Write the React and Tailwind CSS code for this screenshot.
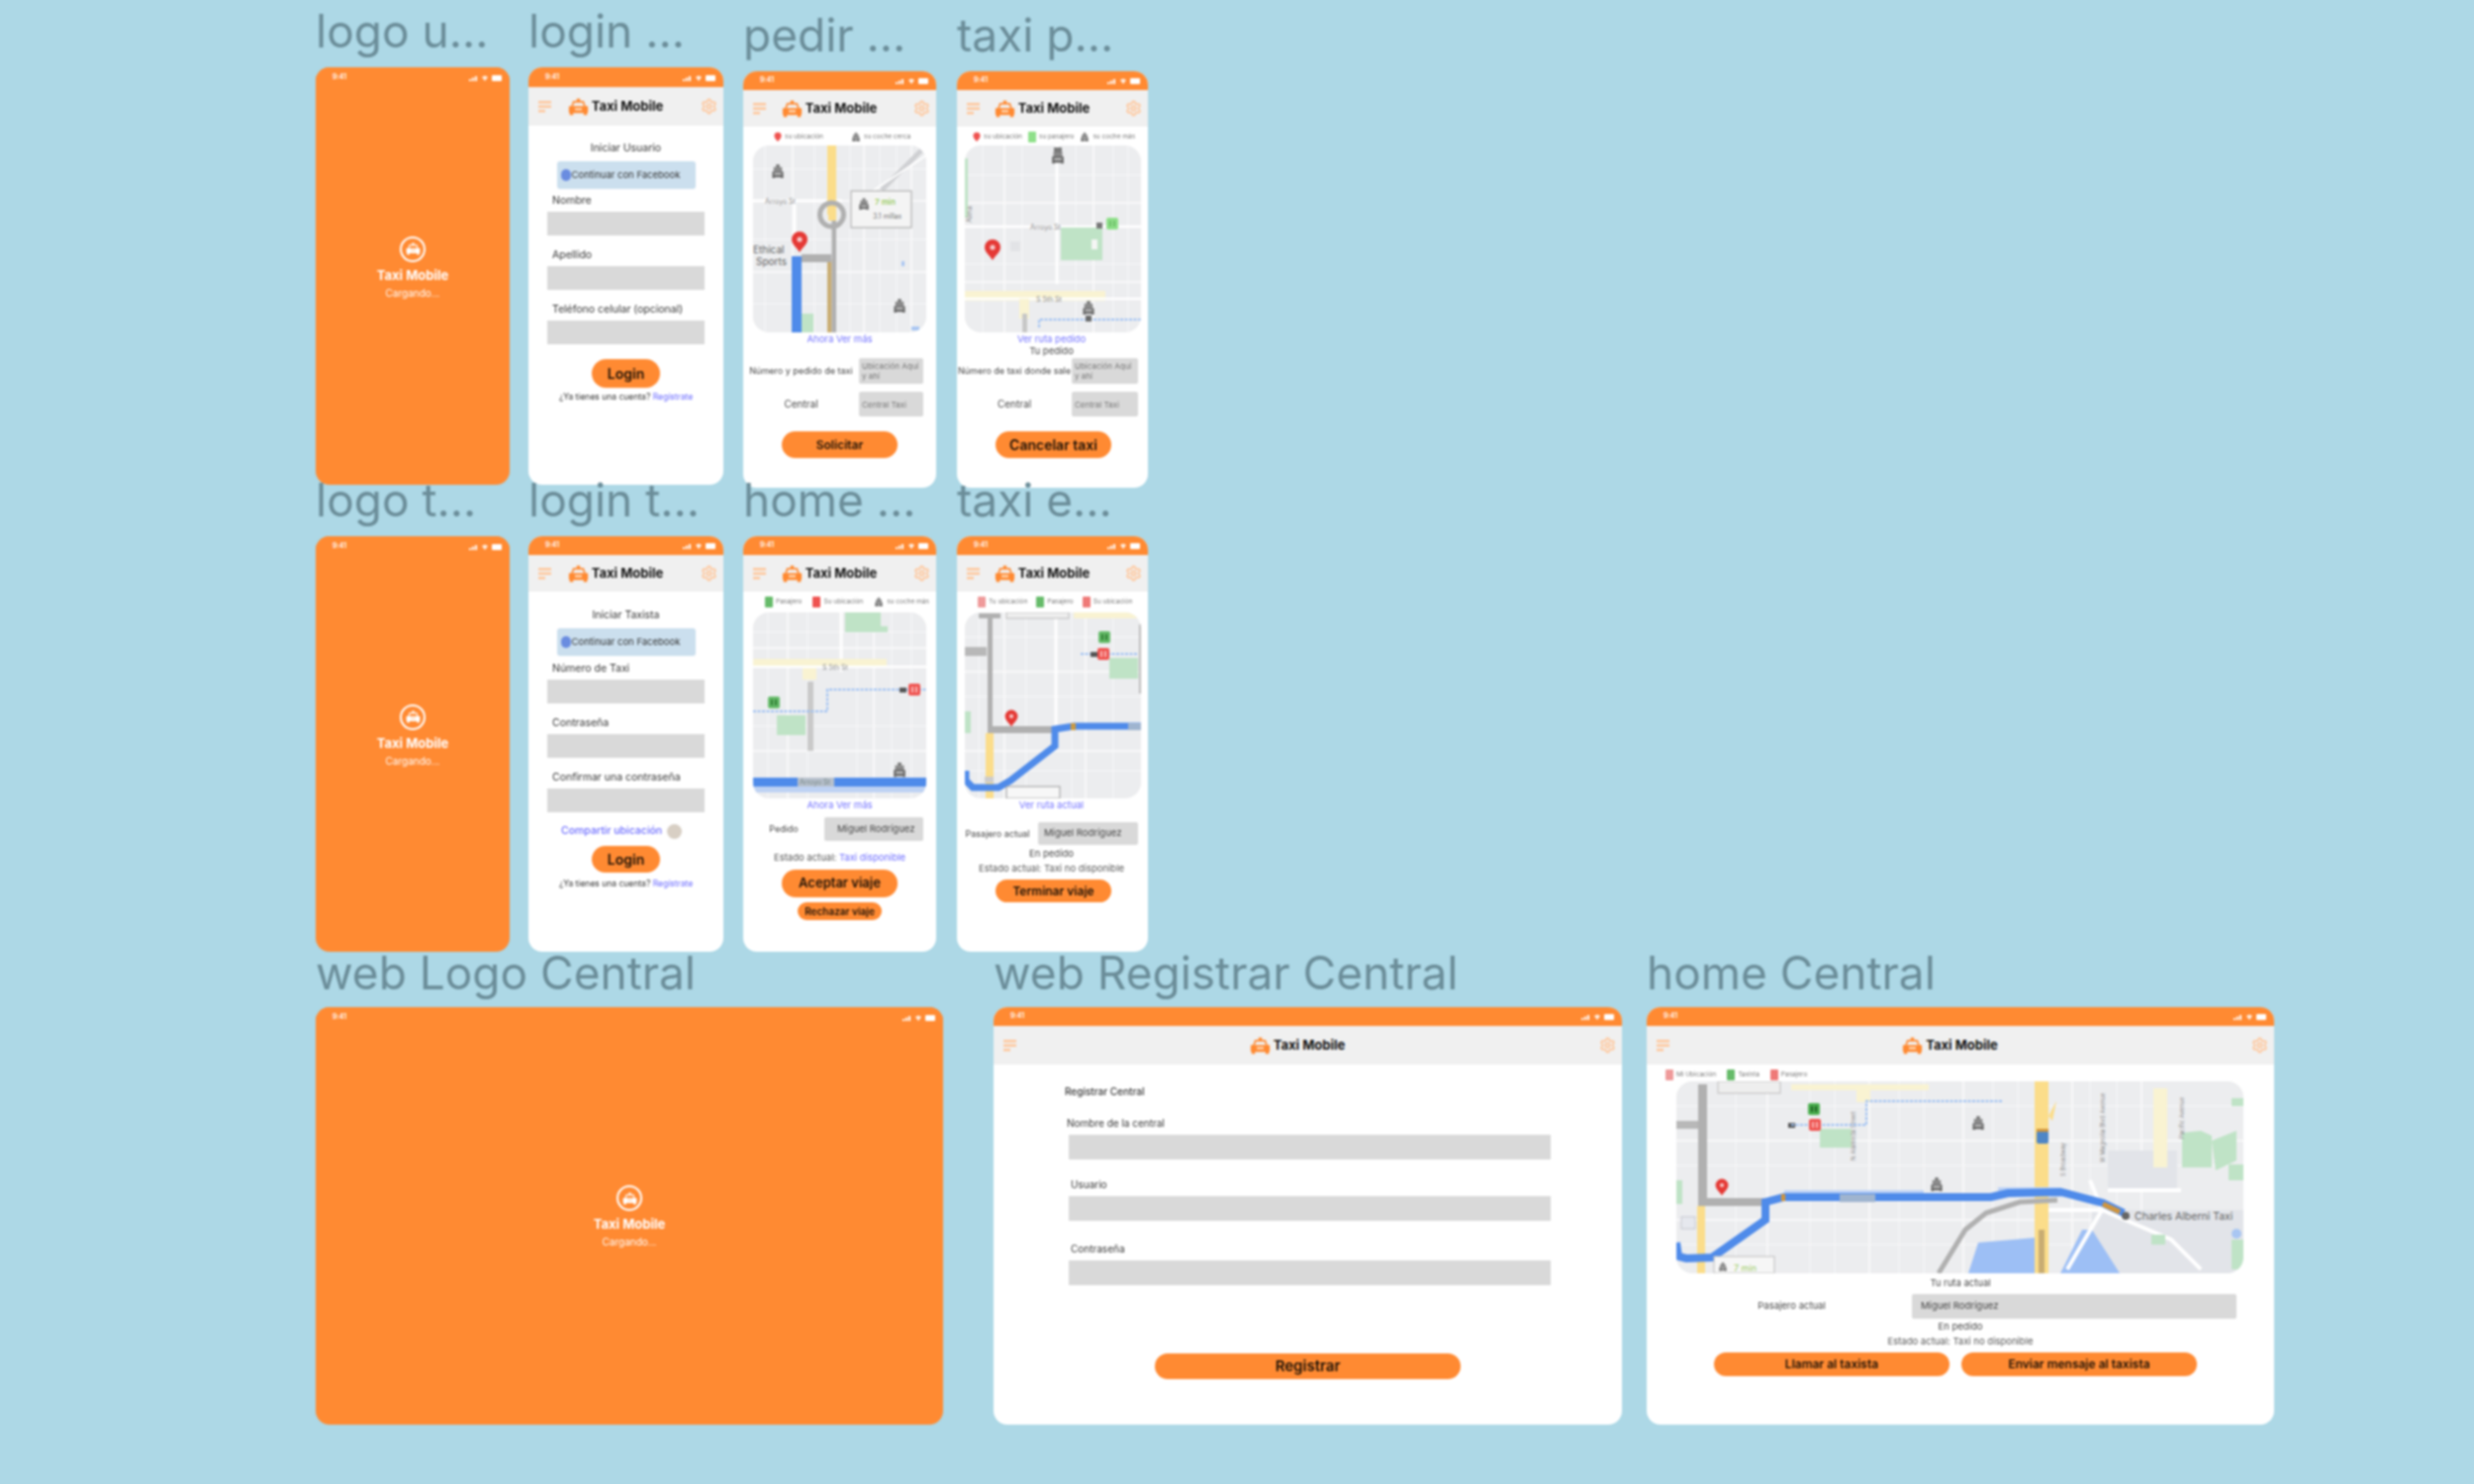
import React from "react";
import { Settings } from "lucide-react";

const ORANGE = "#ff8a32";

function TaxiIcon({ className, color = ORANGE }) {
  return (
    <svg viewBox="0 0 24 20" className={className}>
      <rect x="10" y="0.5" width="4" height="3" fill={color} />
      <path d="M4.5 10 L6.5 4 H17.5 L19.5 10" fill="none" stroke={color} strokeWidth="2" />
      <rect x="1" y="9" width="22" height="8" rx="1" fill={color} />
      <rect x="2" y="16.5" width="4" height="3" fill={color} />
      <rect x="18" y="16.5" width="4" height="3" fill={color} />
      <rect x="8" y="11.5" width="8" height="2.5" fill="#ffd9b8" />
    </svg>
  );
}

function Hamburger() {
  return (
    <svg viewBox="0 0 14 12" className="w-[14px] h-[12px]">
      <rect x="0" y="0" width="13" height="2.5" fill="#ffc79c" />
      <rect x="0" y="4.5" width="13" height="2.5" fill="#ffc79c" />
      <rect x="0" y="9" width="7" height="2.5" fill="#ffc79c" />
    </svg>
  );
}

function StatusIcons() {
  return (
    <svg viewBox="0 0 34 7" className="w-[34px] h-[7px]">
      <rect x="0" y="5" width="2" height="2" fill="#fff" />
      <rect x="3" y="3.5" width="2" height="3.5" fill="#fff" />
      <rect x="6" y="2" width="2" height="5" fill="#fff" />
      <path d="M13 3 Q16 0 19 3 L16 7 Z" fill="#fff" opacity="0.85" />
      <rect x="23" y="1" width="10" height="6" rx="1" fill="#fff" />
    </svg>
  );
}

function StatusBar({ h = "h-[19px]", pl = "pl-[17px]", pr = "pr-[7px]" }) {
  return (
    <div className={`flex items-center justify-between shrink-0 bg-[#ff8a32] text-white text-[7px] font-semibold ${h} ${pl} ${pr}`}>
      <span>9:41</span>
      <StatusIcons />
    </div>
  );
}

function Header({ h = "h-[39px]", pl = "pl-[10px]", pr = "pr-[6px]" }) {
  return (
    <div className={`flex items-center justify-between shrink-0 bg-[#f0f0f0] ${h} ${pl} ${pr}`}>
      <Hamburger />
      <div className="flex items-center gap-[3px] mr-[22px]">
        <TaxiIcon className="w-[21px] h-[18px]" />
        <span className="text-[13px] font-bold text-[#111] leading-none">Taxi Mobile</span>
      </div>
      <Settings className="w-[17px] h-[17px] text-[#ffc79c]" strokeWidth={2.5} />
    </div>
  );
}

function Frame({ pos, label, mb = "mb-[10px]", children }) {
  return (
    <div className={`absolute ${pos}`}>
      <div className={`h-[53px] leading-[53px] text-[46px] text-[#6b8d99] whitespace-nowrap ${mb}`}>{label}</div>
      {children}
    </div>
  );
}

function Splash({ size, pb = "pb-0" }) {
  return (
    <div className={`relative flex flex-col items-center justify-center rounded-[14px] overflow-hidden bg-[#ff8a32] text-white ${size} ${pb}`}>
      <div className="absolute top-0 left-0 right-0">
        <StatusBar h="h-[20px]" pl="pl-[17px]" pr="pr-[7px]" />
      </div>
      <div className="w-[26px] h-[26px] rounded-full border-[2.5px] border-white flex items-center justify-center">
        <TaxiIcon className="w-[15px] h-[13px]" color="#ffffff" />
      </div>
      <div className="text-[13px] font-bold leading-none mt-[7px]">Taxi Mobile</div>
      <div className="text-[10px] leading-none mt-[6px]">Cargando...</div>
    </div>
  );
}

function Btn({ className, text, children }) {
  return (
    <div className={`rounded-full bg-[#ff8a32] flex items-center justify-center font-semibold text-[#1a1006] ${className} ${text}`}>
      {children}
    </div>
  );
}

function Field({ label, labelPl = "pl-[5px]", className = "" }) {
  return (
    <div className={`mx-[19px] ${className}`}>
      <div className={`h-[12px] leading-[12px] text-[10.5px] text-[#333] whitespace-nowrap ${labelPl}`}>{label}</div>
      <div className="h-[24px] mt-[5px] bg-[#d9d9d9]" />
    </div>
  );
}

function FbButton({ className = "" }) {
  return (
    <div className={`w-[140px] h-[28px] mx-auto bg-[#cbdfee] rounded-[3px] flex items-center pl-[4px] gap-[1px] ${className}`}>
      <span className="w-[10px] h-[12px] rounded-full bg-[#6a8ce0] shrink-0" />
      <span className="text-[9.5px] text-[#333] whitespace-nowrap">Continuar con Facebook</span>
    </div>
  );
}

function Footer({ className = "" }) {
  return (
    <div className={`text-center text-[8.5px] leading-[12px] text-[#333] ${className}`}>
      ¿Ya tienes una cuenta? <span className="text-[#6a6aff]">Regístrate</span>
    </div>
  );
}

/* ---------- map pieces ---------- */
function Grid({ w, h, vs, hs }) {
  return (
    <g stroke="#f8f8f9" fill="none">
      {vs.map((x, i) => (
        <line key={"v" + i} x1={x} x2={x} y1="0" y2={h} strokeWidth={i % 3 === 1 ? 2 : 1} />
      ))}
      {hs.map((y, i) => (
        <line key={"h" + i} y1={y} y2={y} x1="0" x2={w} strokeWidth={i % 2 === 1 ? 2 : 1} />
      ))}
    </g>
  );
}

function Car({ x, y, s = 1 }) {
  return (
    <g transform={`translate(${x} ${y}) scale(${s * 0.9})`} fill="#6a6a6a">
      <rect x="-2" y="-9" width="4" height="3" />
      <rect x="-5" y="-6" width="10" height="5" fill="#8a8a8a" />
      <rect x="-6.5" y="-1" width="13" height="7" rx="1" />
      <rect x="-4" y="1" width="8" height="2" fill="#cfcfcf" />
      <rect x="-6.5" y="5" width="3" height="2" />
      <rect x="3.5" y="5" width="3" height="2" />
    </g>
  );
}

function Pin({ x, y, s = 1 }) {
  return (
    <g transform={`translate(${x} ${y}) scale(${s})`}>
      <path d="M0 13 C-3 8 -8 5 -8 0 A8 8 0 0 1 8 0 C8 5 3 8 0 13 Z" fill="#e53935" />
      <circle cx="0" cy="0" r="2.6" fill="#f7c9c9" />
    </g>
  );
}

function Marker({ x, y, color, inner = "#fff" }) {
  return (
    <g transform={`translate(${x} ${y})`}>
      <rect x="-6" y="-6" width="12" height="12" rx="2" fill={color} />
      <rect x="-3" y="-3" width="2" height="6" fill={inner} />
      <rect x="1" y="-3" width="2" height="6" fill={inner} />
    </g>
  );
}

function MapT({ x, y, children, size = 6, color = "#8c8c8c", rot, weight }) {
  return (
    <text
      x={x}
      y={y}
      fontSize={size}
      fill={color}
      fontWeight={weight}
      fontFamily="Inter, sans-serif"
      transform={rot ? `rotate(${rot} ${x} ${y})` : undefined}
    >
      {children}
    </text>
  );
}

function Tip({ x, y, w, h, big }) {
  return (
    <g>
      <rect x={x} y={y} width={w} height={h} fill="#f4f4f4" stroke="#bdbdbd" strokeWidth="1.5" />
      <Car x={x + 13} y={y + 14} s={0.8} />
      <MapT x={x + 24} y={y + 14} size={big ? 10 : 8} color="#9ccc65" weight="600">7 min</MapT>
      <MapT x={x + 22} y={y + 28} size={7} color="#777">3.1 millas</MapT>
    </g>
  );
}

const BLUE = "#4f8bea";
const PARK = "#bfe3c6";

function MapPedir() {
  return (
    <svg viewBox="0 0 175 189" className="block w-[175px] h-[189px]">
      <rect width="175" height="189" fill="#ecedef" />
      <Grid w={175} h={189} vs={[12, 40, 62, 98, 112, 128, 145, 160]} hs={[24, 56, 95, 128, 160]} />
      <path d="M130 45 L170 5" stroke="#cfd0d3" strokeWidth="5" />
      <path d="M100 60 L175 10" stroke="#fff" strokeWidth="2" />
      <line x1="0" x2="90" y1="56" y2="56" stroke="#fff" strokeWidth="3" />
      <line x1="42" x2="42" y1="56" y2="100" stroke="#fff" strokeWidth="3" />
      <rect x="75" y="0" width="9" height="70" fill="#fbdd8a" />
      <rect x="75" y="115" width="4.5" height="74" fill="#c9ad72" />
      <rect x="79.5" y="70" width="4.5" height="119" fill="#b0b0b0" />
      <rect x="49" y="110" width="30" height="8" fill="#b0b0b0" />
      <path d="M80 58 A11 11 0 1 1 79 82 A11 11 0 1 1 80 58 Z" fill="none" stroke="#b0b0b0" strokeWidth="5" />
      <rect x="76" y="62" width="8" height="14" fill="#fbdd8a" />
      <rect x="49" y="170" width="12" height="19" fill={PARK} />
      <rect x="39" y="112" width="10" height="77" fill={BLUE} />
      <rect x="150" y="117" width="3" height="5" fill="#a9c6f2" />
      <rect x="160" y="183" width="8" height="4" fill="#a9c6f2" />
      <MapT x={12} y={59} size={7}>Arroyo St</MapT>
      <MapT x={0} y={109} size={10} color="#5f5f5f">Ethical</MapT>
      <MapT x={3} y={121} size={10} color="#5f5f5f">Sports</MapT>
      <Pin x={47} y={95} />
      <Car x={25} y={27} s={0.95} />
      <Car x={148} y={163} s={0.95} />
      <Tip x={99} y={46} w={61} h={37} />
    </svg>
  );
}

function MapPedido() {
  return (
    <svg viewBox="0 0 178 189" className="block w-[178px] h-[189px]">
      <rect width="178" height="189" fill="#ecedef" />
      <Grid w={178} h={189} vs={[18, 40, 58, 112, 130, 150, 165]} hs={[30, 58, 120, 138]} />
      <rect x="0" y="13" width="3" height="60" fill={PARK} />
      <rect x="0" y="147" width="142" height="10" fill="#f9f3d2" />
      <line x1="93" x2="93" y1="0" y2="140" stroke="#fff" strokeWidth="3" />
      <line x1="0" x2="178" y1="82" y2="82" stroke="#fff" strokeWidth="2.5" />
      <line x1="0" x2="178" y1="155" y2="155" stroke="#fff" strokeWidth="2.5" />
      <rect x="97" y="83" width="42" height="33" fill={PARK} />
      <rect x="128" y="95" width="6" height="10" fill="#f4f6f4" />
      <rect x="46" y="97" width="10" height="10" fill="#e2e3e6" />
      <rect x="55" y="155" width="10" height="20" fill="#f9f3d2" />
      <rect x="58" y="170" width="5" height="19" fill="#c7c7c7" />
      <MapT x={66} y={85} size={7}>Arroyo St</MapT>
      <MapT x={72} y={158} size={7}>S 5th St</MapT>
      <MapT x={7} y={78} size={7} rot={-90}>Alma</MapT>
      <path d="M75 184 V176 H178" fill="none" stroke="#9cc0f4" strokeWidth="2" strokeDasharray="3 1.5" />
      <Car x={94} y={12} s={1} />
      <rect x="90" y="2" width="8" height="5" fill="#7a7a7a" />
      <Car x={125} y={165} s={0.95} />
      <rect x="122" y="172" width="6" height="6" fill="#6a6a6a" />
      <rect x="133" y="78" width="6" height="6" fill="#777" />
      <Marker x={149} y={79} color="#8fe08a" inner="#6fbf6a" />
      <Pin x={28} y={103} />
    </svg>
  );
}

function MapHome() {
  return (
    <svg viewBox="0 0 175 188" className="block w-[175px] h-[188px]">
      <rect width="175" height="188" fill="#ecedef" />
      <Grid w={175} h={188} vs={[15, 35, 55, 105, 122, 140, 160]} hs={[20, 36, 115, 140]} />
      <path d="M93 0 H129 V14 H136 V20 H93 Z" fill={PARK} />
      <line x1="89" x2="89" y1="0" y2="60" stroke="#fff" strokeWidth="3" />
      <rect x="0" y="47" width="135" height="9" fill="#f9f3d2" />
      <rect x="50" y="56" width="14" height="12" fill="#f9f3d2" />
      <line x1="0" x2="175" y1="55" y2="55" stroke="#fff" strokeWidth="2.5" />
      <rect x="55" y="70" width="6" height="70" fill="#c9c9c9" />
      <path d="M0 100 H75 V78 H175" fill="none" stroke="#9cc0f4" strokeWidth="2" strokeDasharray="3 1.5" />
      <rect x="24" y="104" width="29" height="20" fill={PARK} />
      <rect x="148" y="76" width="7" height="5" fill="#555" />
      <Marker x={163} y={78} color="#ef5350" inner="#f9b3b1" />
      <Marker x={21} y={91} color="#66bb6a" inner="#2e7d32" />
      <Car x={148} y={160} s={1} />
      <rect x="0" y="173" width="175" height="9" fill="#bed2f3" />
      <rect x="0" y="167" width="175" height="9" fill={BLUE} />
      <rect x="45" y="167" width="37" height="9" fill="#b7c0cc" />
      <MapT x={47} y={174} size={7} color="#788">Arroyo St</MapT>
      <MapT x={70} y={58} size={7}>S 5th St</MapT>
    </svg>
  );
}

function MapEn() {
  return (
    <svg viewBox="0 0 178 188" className="block w-[178px] h-[188px]">
      <rect width="178" height="188" fill="#ecedef" />
      <Grid w={178} h={188} vs={[14, 40, 62, 108, 122, 150]} hs={[25, 60, 85, 140, 160]} />
      <rect x="0" y="100" width="6" height="22" fill={PARK} />
      <line x1="92" x2="92" y1="0" y2="116" stroke="#fff" strokeWidth="3" />
      <rect x="110" y="0" width="68" height="6" fill="#f9f3d2" />
      <rect x="146" y="46" width="29" height="21" fill={PARK} />
      <rect x="176" y="12" width="2" height="70" fill="#bbb" />
      <rect x="21" y="122" width="8" height="66" fill="#fbdd8a" />
      <rect x="14" y="1" width="22" height="5" fill="#b0b0b0" />
      <rect x="23" y="5" width="5" height="117" fill="#b0b0b0" />
      <rect x="0" y="35" width="22" height="9" fill="#b8b8b8" />
      <rect x="25" y="115" width="65" height="7" fill="#b0b0b0" />
      <rect x="42" y="0" width="63" height="6" fill="#eee" stroke="#bdbdbd" />
      <path
        d="M178 115 H110 L91 118 V135 L46 170 L34 177 H8 L1 170 V160"
        fill="none"
        stroke={BLUE}
        strokeWidth="7"
      />
      <rect x="107" y="112" width="5" height="7" fill="#c99a45" />
      <rect x="165" y="112" width="13" height="7" fill="#9fb4cf" />
      <rect x="20" y="166" width="9" height="6" fill="#ccc" />
      <rect x="42" y="176" width="54" height="12" fill="#f7f7f7" stroke="#999" />
      <path d="M117 42 H175" fill="none" stroke="#9cc0f4" strokeWidth="2" strokeDasharray="3 1.5" />
      <rect x="127" y="40" width="7" height="5" fill="#555" />
      <Marker x={140} y={42} color="#ef5350" inner="#f9b3b1" />
      <Marker x={141} y={25} color="#66bb6a" inner="#2e7d32" />
      <Pin x={47} y={105} s={0.8} />
    </svg>
  );
}

function MapCentral() {
  return (
    <svg viewBox="0 0 573 194" className="block w-[573px] h-[194px]">
      <rect width="573" height="194" fill="#ecedef" />
      <Grid
        w={573}
        h={194}
        vs={[60, 92, 135, 160, 195, 225, 250, 290, 320, 345, 400, 418, 445, 470]}
        hs={[25, 60, 85, 140, 165]}
      />
      <path d="M420 194 V130 L573 130 V194 Z" fill="#e2e4e9" />
      <rect x="436" y="70" width="70" height="40" fill="#e2e4e9" />
      <path d="M295 194 L305 163 L340 160 L362 158 V194 Z" fill="#9dbff5" />
      <path d="M388 194 L410 150 L420 150 L448 194 Z" fill="#9dbff5" />
      <path d="M375 130 L430 130 M418 100 L430 130 L395 190 M430 130 L500 160 L530 190 M436 110 H510" stroke="#fff" strokeWidth="4" fill="none" />
      <path d="M511 87 V52 L530 50 L541 55 V87 Z" fill={PARK} />
      <path d="M541 60 L566 50 V80 L545 90 Z" fill={PARK} />
      <rect x="558" y="84" width="15" height="16" fill={PARK} />
      <rect x="561" y="17" width="12" height="8" fill={PARK} />
      <rect x="480" y="155" width="14" height="10" fill={PARK} />
      <rect x="561" y="160" width="12" height="30" fill={PARK} />
      <rect x="0" y="100" width="6" height="24" fill={PARK} />
      <rect x="482" y="7" width="14" height="80" fill="#f9f3d2" />
      <rect x="116" y="3" width="139" height="6" fill="#f9f3d2" />
      <rect x="182" y="5" width="14" height="16" fill="#f9f3d2" />
      <rect x="145" y="48" width="32" height="19" fill={PARK} />
      <rect x="362" y="0" width="14" height="194" fill="#fbdd8a" />
      <path d="M376 35 L384 20 L380 40 Z" fill="#fbdd8a" />
      <rect x="21" y="126" width="8" height="68" fill="#fbdd8a" />
      <rect x="366" y="150" width="6" height="44" fill="#c9ad72" />
      <path d="M265 194 L292 150 L313 133 L347 122 L385 120" fill="none" stroke="#b0b0b0" strokeWidth="5" />
      <rect x="22" y="3" width="9" height="118" fill="#b0b0b0" />
      <rect x="0" y="40" width="22" height="8" fill="#b8b8b8" />
      <rect x="22" y="118" width="70" height="8" fill="#b0b0b0" />
      <rect x="42" y="0" width="63" height="12" fill="#eee" stroke="#bdbdbd" />
      <path d="M109 114 H250 M325 111 H389" stroke="#bdd2f5" strokeWidth="8" fill="none" />
      <path
        d="M0 163 L2 177 L10 179 L36 178 L90 140 V122 L109 117 H318 L335 113 L389 112 L431 123 L452 133"
        fill="none"
        stroke={BLUE}
        strokeWidth="8"
      />
      <path d="M431 124 L448 132" stroke="#d1953c" strokeWidth="5" />
      <rect x="106" y="114" width="4" height="7" fill="#d1953c" />
      <rect x="165" y="114" width="36" height="8" fill="#9fb4cf" />
      <circle cx="454" cy="136" r="4" fill="#666" />
      <MapT x={463} y={140} size={10.5} color="#5f5f5f">Charles Alberni Taxi</MapT>
      <MapT x={181} y={80} size={6} rot={-90}>N Alameda Street</MapT>
      <MapT x={393} y={96} size={6} rot={-90}>S Broadway</MapT>
      <MapT x={433} y={82} size={6} rot={-90}>W Magnolia Blvd Avenue</MapT>
      <MapT x={513} y={58} size={6} rot={-90}>Pacific Avenue</MapT>
      <rect x="113" y="42" width="7" height="5" fill="#555" />
      <path d="M116 44 H192 V20 H330" fill="none" stroke="#9cc0f4" strokeWidth="2" strokeDasharray="3 1.5" />
      <rect x="364" y="50" width="12" height="13" rx="2" fill="#4f86c6" />
      <rect x="364" y="48" width="12" height="3" fill="#d1953c" />
      <Marker x={140} y={44} color="#ef5350" inner="#f9b3b1" />
      <Marker x={139} y={28} color="#4caf50" inner="#1b5e20" />
      <Car x={305} y={43} s={0.95} />
      <Car x={263} y={105} s={0.95} />
      <Pin x={46} y={105} s={0.8} />
      <rect x="38" y="177" width="61" height="17" fill="#f6f6f6" stroke="#bdbdbd" />
      <Car x={47} y={188} s={0.6} />
      <MapT x={58} y={192} size={9} color="#9ccc65">7 min</MapT>
      <rect x="5" y="137" width="14" height="12" fill="#e6e8ee" stroke="#c6c8d0" />
      <circle cx="566" cy="154" r="5" fill="#a9c6f2" />
    </svg>
  );
}

/* ---------- legend ---------- */
function LegendPin() {
  return (
    <svg viewBox="-9 -9 18 23" className="w-[8px] h-[11px] shrink-0">
      <path d="M0 13 C-3 8 -8 5 -8 0 A8 8 0 0 1 8 0 C8 5 3 8 0 13 Z" fill="#ef5350" />
    </svg>
  );
}
function LegendCar() {
  return (
    <svg viewBox="-8 -10 16 18" className="w-[10px] h-[11px] shrink-0">
      <Car x={0} y={0} s={1} />
    </svg>
  );
}
function LegendBox({ color }) {
  return <span className={`w-[8px] h-[11px] rounded-[1px] shrink-0 ${color}`} />;
}
function LT({ children }) {
  return <span className="text-[6.5px] text-[#777] whitespace-nowrap leading-[12px]">{children}</span>;
}

function Legend({ className, items }) {
  return (
    <div className={`flex items-center h-[12px] shrink-0 ${className}`}>
      {items.map(([icon, label], i) => (
        <div key={i} className="flex items-center gap-[3px]">
          {icon}
          <LT>{label}</LT>
        </div>
      ))}
    </div>
  );
}

const linkCls = "text-[#7272ff] text-[9.5px] leading-[12px] text-center";
const valCls = "bg-[#d9d9d9] rounded-[2px] text-[#777] text-[8px] leading-[10px] flex items-center pl-[3px]";

function App() {
  return (
    <div className="relative w-[2500px] h-[1500px] overflow-hidden bg-[#add8e6] font-[Inter,sans-serif]">
      <div className="relative w-full h-full blur-[1.3px]">
        {/* Row 1 */}
        <Frame pos="left-[319px] top-[5px] w-[196px]" label="logo u...">
          <Splash size="w-[196px] h-[422px]" pb="pb-[19px]" />
        </Frame>

        <Frame pos="left-[534px] top-[5px] w-[197px]" label="login ...">
          <div className="w-[197px] h-[422px] rounded-[14px] bg-white overflow-hidden flex flex-col">
            <StatusBar h="h-[20px]" />
            <Header />
            <div className="text-center text-[10.5px] leading-[12px] text-[#333] mt-[17px]">Iniciar Usuario</div>
            <FbButton className="mt-[7px]" />
            <Field className="mt-[6px]" label="Nombre" />
            <Field className="mt-[14px]" label="Apellido" />
            <Field className="mt-[14px]" label="Teléfono celular (opcional)" />
            <Btn className="w-[69px] h-[29px] mx-auto mt-[15px]" text="text-[14px]">Login</Btn>
            <Footer className="mt-[3px]" />
          </div>
        </Frame>

        <Frame pos="left-[751px] top-[9px] w-[195px]" label="pedir ...">
          <div className="w-[195px] h-[421px] rounded-[14px] bg-white overflow-hidden flex flex-col">
            <StatusBar />
            <Header h="h-[37px]" />
            <Legend
              className="mt-[4px] pl-[31px] gap-[28px]"
              items={[
                [<LegendPin key="a" />, "su ubicación"],
                [<LegendCar key="b" />, "su coche cerca"],
              ]}
            />
            <div className="mt-[3px] ml-[10px] w-[175px] h-[189px] rounded-[16px] overflow-hidden shrink-0">
              <MapPedir />
            </div>
            <div className={`${linkCls} mt-[1px]`}>Ahora Ver más</div>
            <div className="flex items-center mt-[13px]">
              <div className="w-[117px] text-center text-[9px] text-[#444] whitespace-nowrap">Número y pedido de taxi</div>
              <div className={`w-[65px] h-[26px] ${valCls}`}>Ubicación Aquí y ahí</div>
            </div>
            <div className="flex items-center mt-[8px]">
              <div className="w-[117px] text-center text-[10px] text-[#444]">Central</div>
              <div className={`w-[65px] h-[25px] ${valCls}`}>Central Taxi</div>
            </div>
            <Btn className="w-[117px] h-[27px] ml-[39px] mt-[15px]" text="text-[12px] font-bold">Solicitar</Btn>
          </div>
        </Frame>

        <Frame pos="left-[967px] top-[9px] w-[193px]" label="taxi p...">
          <div className="w-[193px] h-[421px] rounded-[14px] bg-white overflow-hidden flex flex-col">
            <StatusBar />
            <Header h="h-[37px]" />
            <Legend
              className="mt-[4px] pl-[16px] gap-[6px]"
              items={[
                [<LegendPin key="a" />, "su ubicación"],
                [<LegendBox key="b" color="bg-[#8fe08a]" />, "su pasajero"],
                [<LegendCar key="c" />, "su coche más"],
              ]}
            />
            <div className="mt-[3px] ml-[8px] w-[178px] h-[189px] rounded-[16px] overflow-hidden shrink-0">
              <MapPedido />
            </div>
            <div className={`${linkCls} mt-[1px] -ml-[2px]`}>Ver ruta pedido</div>
            <div className="text-center text-[9.5px] leading-[12px] text-[#444] -ml-[2px]">Tu pedido</div>
            <div className="flex items-center mt-[1px]">
              <div className="w-[116px] text-center text-[9px] text-[#444] whitespace-nowrap">Número de taxi donde sale</div>
              <div className={`w-[67px] h-[26px] ${valCls}`}>Ubicación Aquí y ahí</div>
            </div>
            <div className="flex items-center mt-[8px]">
              <div className="w-[116px] text-center text-[10px] text-[#444]">Central</div>
              <div className={`w-[67px] h-[25px] ${valCls}`}>Central Taxi</div>
            </div>
            <Btn className="w-[117px] h-[27px] ml-[39px] mt-[15px]" text="text-[14px] font-bold">Cancelar taxi</Btn>
          </div>
        </Frame>

        {/* Row 2 */}
        <Frame pos="left-[319px] top-[479px] w-[196px]" label="logo t...">
          <Splash size="w-[196px] h-[420px]" pb="pb-[19px]" />
        </Frame>

        <Frame pos="left-[534px] top-[479px] w-[197px]" label="login t...">
          <div className="w-[197px] h-[420px] rounded-[14px] bg-white overflow-hidden flex flex-col">
            <StatusBar />
            <Header h="h-[37px]" />
            <div className="text-center text-[10.5px] leading-[12px] text-[#333] mt-[18px]">Iniciar Taxista</div>
            <FbButton className="mt-[7px]" />
            <Field className="mt-[7px]" label="Número de Taxi" />
            <Field className="mt-[14px]" label="Contraseña" />
            <Field className="mt-[14px]" label="Confirmar una contraseña" />
            <div className="flex items-center h-[14px] mt-[12px] pl-[33px] gap-[5px]">
              <span className="text-[#6a6aff] text-[10.5px] whitespace-nowrap font-medium">Compartir ubicación</span>
              <span className="w-[15px] h-[15px] rounded-full bg-[#d8cfc4]" />
            </div>
            <Btn className="w-[69px] h-[27px] mx-auto mt-[8px]" text="text-[14px]">Login</Btn>
            <Footer className="mt-[5px]" />
          </div>
        </Frame>

        <Frame pos="left-[751px] top-[479px] w-[195px]" label="home ...">
          <div className="w-[195px] h-[420px] rounded-[14px] bg-white overflow-hidden flex flex-col">
            <StatusBar />
            <Header h="h-[37px]" />
            <Legend
              className="mt-[4px] pl-[22px] gap-[11px]"
              items={[
                [<LegendBox key="a" color="bg-[#66bb6a]" />, "Pasajero"],
                [<LegendBox key="b" color="bg-[#ef5350]" />, "Su ubicación"],
                [<LegendCar key="c" />, "su coche más"],
              ]}
            />
            <div className="mt-[5px] ml-[10px] w-[175px] h-[188px] rounded-[16px] overflow-hidden shrink-0">
              <MapHome />
            </div>
            <div className={`${linkCls} mt-[1px]`}>Ahora Ver más</div>
            <div className="flex items-center mt-[6px]">
              <div className="w-[82px] text-center text-[9px] text-[#444]">Pedido</div>
              <div className="w-[100px] h-[24px] bg-[#d9d9d9] rounded-[2px] flex items-center pl-[13px] text-[9.5px] text-[#444] whitespace-nowrap">Miguel Rodríguez</div>
            </div>
            <div className="text-center text-[9.5px] leading-[12px] text-[#555] mt-[11px]">
              Estado actual: <span className="text-[#6a6aff]">Taxi disponible</span>
            </div>
            <Btn className="w-[117px] h-[28px] ml-[39px] mt-[6px]" text="text-[13px] font-bold">Aceptar viaje</Btn>
            <Btn className="w-[85px] h-[18px] ml-[55px] mt-[5px]" text="text-[10px] font-medium">Rechazar viaje</Btn>
          </div>
        </Frame>

        <Frame pos="left-[967px] top-[479px] w-[193px]" label="taxi e...">
          <div className="w-[193px] h-[420px] rounded-[14px] bg-white overflow-hidden flex flex-col">
            <StatusBar />
            <Header h="h-[37px]" />
            <Legend
              className="mt-[4px] pl-[21px] gap-[9px]"
              items={[
                [<LegendBox key="a" color="bg-[#ef9a9a]" />, "Tu ubicación"],
                [<LegendBox key="b" color="bg-[#66bb6a]" />, "Pasajero"],
                [<LegendBox key="c" color="bg-[#ef7a78]" />, "Su ubicación"],
              ]}
            />
            <div className="mt-[5px] ml-[8px] w-[178px] h-[188px] rounded-[16px] overflow-hidden shrink-0">
              <MapEn />
            </div>
            <div className={`${linkCls} mt-[1px] -ml-[2px]`}>Ver ruta actual</div>
            <div className="flex items-center mt-[11px]">
              <div className="w-[82px] text-center text-[9px] text-[#444] whitespace-nowrap">Pasajero actual</div>
              <div className="w-[101px] h-[23px] bg-[#d9d9d9] rounded-[2px] flex items-center pl-[6px] text-[9.5px] text-[#444] whitespace-nowrap">Miguel Rodríguez</div>
            </div>
            <div className="text-center text-[9.5px] leading-[12px] text-[#444] mt-[3px] -ml-[2px]">En pedido</div>
            <div className="text-center text-[9.5px] leading-[12px] text-[#555] mt-[3px] -ml-[2px]">Estado actual: Taxi no disponible</div>
            <Btn className="w-[117px] h-[23px] ml-[39px] mt-[5px]" text="text-[12px]">Terminar viaje</Btn>
          </div>
        </Frame>

        {/* Row 3 */}
        <Frame pos="left-[319px] top-[957px] w-[634px]" label="web Logo Central" mb="mb-[8px]">
          <Splash size="w-[634px] h-[422px]" />
        </Frame>

        <Frame pos="left-[1004px] top-[957px] w-[635px]" label="web Registrar Central" mb="mb-[8px]">
          <div className="w-[635px] h-[422px] rounded-[14px] bg-white overflow-hidden flex flex-col">
            <StatusBar />
            <Header />
            <div className="ml-[72px] mt-[21px] text-[10px] leading-[12px] text-[#333] font-medium">Registrar Central</div>
            <div className="ml-[74px] mt-[20px] text-[10px] leading-[12px] text-[#333]">Nombre de la central</div>
            <div className="ml-[76px] mt-[6px] w-[487px] h-[25px] bg-[#d9d9d9]" />
            <div className="ml-[78px] mt-[19px] text-[10px] leading-[12px] text-[#333]">Usuario</div>
            <div className="ml-[76px] mt-[6px] w-[487px] h-[25px] bg-[#d9d9d9]" />
            <div className="ml-[78px] mt-[22px] text-[10px] leading-[12px] text-[#333]">Contraseña</div>
            <div className="ml-[76px] mt-[6px] w-[487px] h-[25px] bg-[#d9d9d9]" />
            <Btn className="ml-[163px] mt-[69px] w-[309px] h-[26px]" text="text-[15px] font-bold">Registrar</Btn>
          </div>
        </Frame>

        <Frame pos="left-[1664px] top-[957px] w-[634px]" label="home Central" mb="mb-[8px]">
          <div className="w-[634px] h-[422px] rounded-[14px] bg-white overflow-hidden flex flex-col">
            <StatusBar />
            <Header />
            <Legend
              className="mt-[4px] pl-[19px] gap-[11px]"
              items={[
                [<LegendBox key="a" color="bg-[#ef9a9a]" />, "Mi Ubicación"],
                [<LegendBox key="b" color="bg-[#66bb6a]" />, "Taxista"],
                [<LegendBox key="c" color="bg-[#ef7a78]" />, "Pasajero"],
              ]}
            />
            <div className="mt-[1px] ml-[30px] w-[573px] h-[194px] rounded-[16px] overflow-hidden shrink-0">
              <MapCentral />
            </div>
            <div className="mt-[4px] text-center text-[9.5px] leading-[12px] text-[#444]">Tu ruta actual</div>
            <div className="flex items-center mt-[5px]">
              <div className="w-[293px] text-center text-[9.5px] text-[#444] whitespace-nowrap">Pasajero actual</div>
              <div className="-ml-[25px] w-[328px] h-[25px] bg-[#d9d9d9] rounded-[2px] flex items-center pl-[9px] text-[9.5px] text-[#444]">Miguel Rodríguez</div>
            </div>
            <div className="mt-[2px] text-center text-[9.5px] leading-[12px] text-[#444]">En pedido</div>
            <div className="mt-[3px] text-center text-[9.5px] leading-[12px] text-[#555]">Estado actual: Taxi no disponible</div>
            <div className="flex mt-[5px] ml-[68px] gap-[12px]">
              <Btn className="w-[238px] h-[24px]" text="text-[12px]">Llamar al taxista</Btn>
              <Btn className="w-[238px] h-[24px]" text="text-[12px]">Enviar mensaje al taxista</Btn>
            </div>
          </div>
        </Frame>
      </div>
    </div>
  );
}

export default App;
